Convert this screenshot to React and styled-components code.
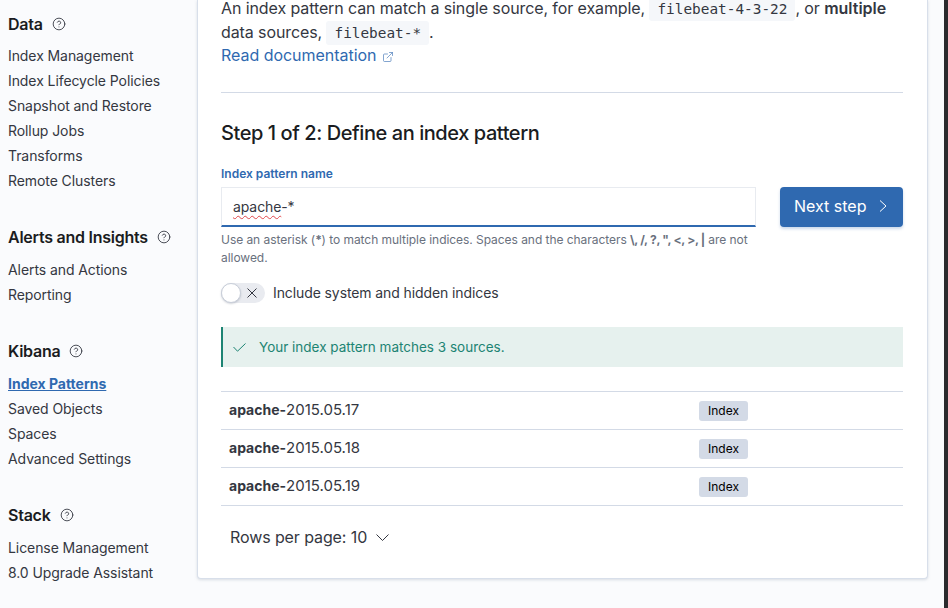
import React from "react";
import styled, { createGlobalStyle } from "styled-components";
import { CircleHelp, ExternalLink } from "lucide-react";

const Global = createGlobalStyle`
  html, body { margin: 0; padding: 0; background: #fafbfd; }
  body { font-family: Inter, "Noto Sans", sans-serif; color: #343741; overflow: hidden; }
  * { box-sizing: border-box; }
`;

const Page = styled.div`
  display: flex;
  width: 948px;
  height: 608px;
  overflow: hidden;
  background: #fafbfd;
`;
const Sidebar = styled.nav`
  flex: 0 0 197px;
  padding: 12px 0 0 8px;
  display: flex;
  flex-direction: column;
  gap: 32px;
`;
const Section = styled.section`
  display: flex;
  flex-direction: column;
  gap: ${(p) => p.$gap}px;
`;
const SectionTitle = styled.h3`
  margin: 0;
  display: flex;
  align-items: center;
  gap: 9px;
  height: 24px;
  font-size: 16px;
  line-height: 24px;
  font-weight: 600;
  letter-spacing: -0.25px;
  color: #1a1c21;
  svg { color: #343741; }
`;
const NavList = styled.ul`
  list-style: none;
  margin: 0;
  padding: 0;
`;
const NavItem = styled.li`
  height: 25px;
  line-height: 25px;
  font-size: 14px;
  white-space: nowrap;
  letter-spacing: ${(p) => (p.$active ? "0" : "-0.08px")};
  color: ${(p) => (p.$active ? "#2f69b0" : "#343741")};
  font-weight: ${(p) => (p.$active ? 700 : 400)};
  text-decoration: ${(p) => (p.$active ? "underline" : "none")};
`;
const Main = styled.main`
  flex: 0 0 731px;
  height: 579px;
`;
const Card = styled.div`
  display: flow-root;
  height: 579px;
  padding: 0 24px 0 23px;
  background: #fff;
  border: 1px solid #d8dfea;
  border-top: 0;
  border-radius: 0 0 4px 4px;
  box-shadow: 0 1px 3px rgba(152, 162, 179, 0.35);
`;
const Scrollbar = styled.div`
  flex: 0 0 4px;
  margin-left: 16px;
  background: #2b2b2e;
`;
const Intro = styled.p`
  margin: -4px 0 0;
  font-size: 16px;
  line-height: 24px;
  letter-spacing: -0.1px;
  color: #343741;
  strong { font-weight: 600; letter-spacing: 0; }
`;
const Code = styled.code`
  font-family: "DejaVu Sans Mono", "Liberation Mono", monospace;
  font-size: 14.4px;
  line-height: 1;
  letter-spacing: 0;
  color: #343741;
  background: #f5f7fa;
  padding: 3.6px 8px;
  border-radius: 3px;
`;
const DocLink = styled.a`
  display: flex;
  align-items: center;
  gap: 5px;
  color: #2f69b0;
  font-size: 16px;
  line-height: 23px;
  letter-spacing: -0.03px;
  svg { margin-top: 3px; opacity: 0.85; }
`;
const Rule = styled.hr`
  border: 0;
  height: 1px;
  background: #d3dae6;
  margin: 25px 0 0;
`;
const StepTitle = styled.h2`
  margin: 26px 0 0;
  font-size: 20px;
  line-height: 28px;
  font-weight: 500;
  letter-spacing: -0.43px;
  color: #1a1c21;
`;
const FormRow = styled.div`
  display: flex;
  gap: 24px;
  margin-top: 20px;
`;
const FormField = styled.div`
  flex: 0 0 535px;
`;
const FieldLabel = styled.label`
  display: block;
  font-size: 12px;
  line-height: 14px;
  font-weight: 600;
  color: #2f69b0;
  margin-bottom: 6px;
`;
const InputBox = styled.div`
  height: 40px;
  padding: 0 11px 1px;
  display: flex;
  align-items: center;
  font-size: 14px;
  letter-spacing: -0.1px;
  background: #fff;
  border: 1px solid #e8ebf0;
  border-bottom: 2px solid #2f69b0;
  color: #343741;
`;
const Misspelled = styled.span`
  text-decoration: underline wavy #e0464a 1px;
  text-underline-offset: 3px;
`;
const HelpText = styled.div`
  margin-top: 4px;
  font-size: 12px;
  line-height: 18px;
  letter-spacing: -0.05px;
  color: #69707d;
  strong { font-weight: 700; letter-spacing: -0.3px; }
`;
const NextButton = styled.button`
  flex: 0 0 123px;
  height: 40px;
  margin-top: 20px;
  padding: 0 0 2px 14px;
  border: 0;
  border-radius: 4px;
  background: #2f69b0;
  color: #fff;
  font: 400 16px Inter, sans-serif;
  display: flex;
  align-items: center;
  gap: 13px;
  box-shadow: 0 2px 3px rgba(47, 105, 176, 0.25);
`;
const SwitchRow = styled.div`
  display: flex;
  align-items: center;
  gap: 8px;
  height: 20px;
  margin-top: 16px;
  font-size: 14px;
  letter-spacing: -0.1px;
  color: #343741;
`;
const SwitchLabel = styled.span`
  margin-top: -2px;
`;
const SwitchTrack = styled.span`
  position: relative;
  display: flex;
  align-items: center;
  justify-content: flex-end;
  width: 44px;
  height: 20px;
  padding-right: 8px;
  border-radius: 10px;
  background: #e9ebf0;
  color: #343741;
`;
const SwitchThumb = styled.span`
  position: absolute;
  left: 0;
  top: 0;
  width: 20px;
  height: 20px;
  border-radius: 50%;
  background: #fff;
  border: 1px solid #c8ced9;
  box-shadow: 0 1px 2px rgba(100, 110, 130, 0.3);
`;
const Callout = styled.div`
  display: flex;
  align-items: center;
  gap: 13px;
  height: 40px;
  margin-top: 24px;
  padding-left: 10px;
  background: #e6f1ee;
  border-left: 2px solid #1d8473;
  font-size: 13.5px;
  color: #1d8473;
`;
const Table = styled.div`
  margin-top: 24px;
  border-top: 1px solid #d3dae6;
`;
const Row = styled.div`
  display: grid;
  grid-template-columns: 470px auto;
  align-items: center;
  height: 38px;
  padding-left: 8px;
  border-bottom: 1px solid #d3dae6;
  font-size: 15px;
  color: #343741;
  strong { font-size: 14px; font-weight: 700; }
`;
const SourceName = styled.span`
  margin-top: -2px;
`;
const Badge = styled.span`
  justify-self: start;
  height: 20px;
  padding: 0 9px;
  line-height: 20px;
  font-size: 12px;
  font-weight: 400;
  color: #000;
  background: #d3dae6;
  border-radius: 3px;
`;
const RowsPerPage = styled.div`
  display: flex;
  align-items: center;
  gap: 9px;
  margin-top: 19px;
  padding-left: 9px;
  height: 24px;
  font-size: 16px;
  letter-spacing: -0.1px;
  color: #343741;
`;
const Glyph = styled.svg`
  flex: none;
  fill: none;
  stroke: currentColor;
  stroke-width: 1;
`;

const nav = [
  { title: "Data", gap: 7.3, items: ["Index Management", "Index Lifecycle Policies", "Snapshot and Restore", "Rollup Jobs", "Transforms", "Remote Clusters"] },
  { title: "Alerts and Insights", gap: 8, items: ["Alerts and Actions", "Reporting"] },
  { title: "Kibana", gap: 8, items: ["Index Patterns", "Saved Objects", "Spaces", "Advanced Settings"] },
  { title: "Stack", gap: 8, items: ["License Management", "8.0 Upgrade Assistant"] },
];
const sources = ["2015.05.17", "2015.05.18", "2015.05.19"];

export default function App() {
  return (
    <>
      <Global />
      <Page>
        <Sidebar>
          {nav.map((s) => (
            <Section key={s.title} $gap={s.gap}>
              <SectionTitle>
                {s.title}
                <CircleHelp size={14} strokeWidth={1.5} />
              </SectionTitle>
              <NavList>
                {s.items.map((i) => (
                  <NavItem key={i} $active={i === "Index Patterns"}>{i}</NavItem>
                ))}
              </NavList>
            </Section>
          ))}
        </Sidebar>
        <Main>
          <Card>
            <Intro>
              An index pattern can match a single source, for example, <Code>filebeat-4-3-22</Code>, or <strong>multiple</strong> data sources, <Code>filebeat-*</Code>.
            </Intro>
            <DocLink>
              Read documentation
              <ExternalLink size={12} strokeWidth={1.4} />
            </DocLink>
            <Rule />
            <StepTitle>Step 1 of 2: Define an index pattern</StepTitle>
            <FormRow>
              <FormField>
                <FieldLabel>Index pattern name</FieldLabel>
                <InputBox><span><Misspelled>apache</Misspelled>-*</span></InputBox>
                <HelpText>
                  Use an asterisk (<strong>*</strong>) to match multiple indices. Spaces and the characters <strong>\, /, ?, ", &lt;, &gt;, |</strong> are not allowed.
                </HelpText>
              </FormField>
              <NextButton>
                Next step
                <Glyph width="8" height="12" viewBox="0 0 8 12"><path d="M1 0.5l6 5.5-6 5.5" /></Glyph>
              </NextButton>
            </FormRow>
            <SwitchRow>
              <SwitchTrack>
                <SwitchThumb />
                <Glyph width="10" height="10" viewBox="0 0 10 10"><path d="M0.5 0.5l9 9M9.5 0.5l-9 9" /></Glyph>
              </SwitchTrack>
              <SwitchLabel>Include system and hidden indices</SwitchLabel>
            </SwitchRow>
            <Callout>
              <Glyph width="13" height="9" viewBox="0 0 13 9"><path d="M0.5 4l4 4.2L12.5 0.5" /></Glyph>
              Your index pattern matches 3 sources.
            </Callout>
            <Table>
              {sources.map((d) => (
                <Row key={d}>
                  <SourceName><strong>apache-</strong>{d}</SourceName>
                  <Badge>Index</Badge>
                </Row>
              ))}
            </Table>
            <RowsPerPage>
              Rows per page: 10
              <Glyph width="13" height="7" viewBox="0 0 13 7"><path d="M0.5 0.5l6 6 6-6" /></Glyph>
            </RowsPerPage>
          </Card>
        </Main>
        <Scrollbar />
      </Page>
    </>
  );
}
